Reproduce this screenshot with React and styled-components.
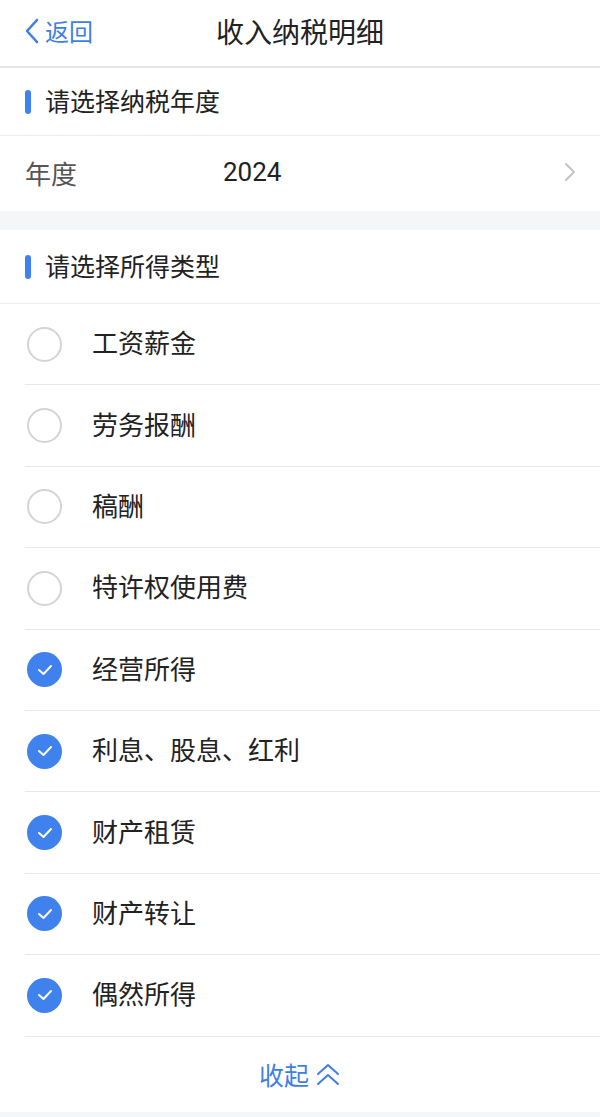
import React from "react";
import styled, { createGlobalStyle } from "styled-components";

const GlobalStyle = createGlobalStyle`
  html, body {
    margin: 0;
    padding: 0;
    background: #f5f6f8;
    font-family: "Noto Sans CJK SC", "Noto Sans", sans-serif;
  }
`;

const Page = styled.div`
  width: 600px;
  min-height: 1117px;
  background: #f5f6f8;
`;

const NavBar = styled.div`
  height: 61px;
  padding-bottom: 5px;
  display: grid;
  grid-template-columns: 120px 1fr 120px;
  align-items: center;
  background: #fff;
  border-bottom: 2px solid #e6e6e6;
`;

const BackLink = styled.div`
  display: flex;
  align-items: center;
  padding-left: 23px;
  color: #3e7fe6;
  font-size: 24px;
  gap: 4px;
`;

const Title = styled.div`
  text-align: center;
  font-size: 28px;
  color: #222;
`;

const Section = styled.div`
  background: #fff;
  margin-bottom: ${(p) => p.gap || 0}px;
`;

const SectionHead = styled.div`
  height: ${(p) => p.h}px;
  box-sizing: border-box;
  padding: 0 0 4px 25px;
  display: flex;
  align-items: center;
  gap: 14px;
  font-size: 25px;
  color: #222;
  border-bottom: 1px solid #ececec;
  &::before {
    content: "";
    width: 6px;
    height: 24px;
    margin-top: 4px;
    border-radius: 3px;
    background: #3f82ee;
  }
`;

const YearRow = styled.div`
  height: 75px;
  box-sizing: border-box;
  display: flex;
  align-items: center;
  padding: 0 24px 3px 25px;
  font-size: 26px;
`;

const YearLabel = styled.span`
  width: 198px;
  color: #555;
`;

const YearValue = styled.span`
  flex: 1;
  color: #222;
  font-family: Roboto, "Noto Sans", sans-serif;
`;

const Option = styled.div`
  height: 80.4px;
  margin-left: 25px;
  display: flex;
  align-items: center;
  gap: 30px;
  font-size: 26px;
  color: #222;
  border-bottom: 1px solid #e8e8e8;
`;

const OptionText = styled.span`
  margin-top: -5px;
`;

const Radio = styled.div`
  width: 35px;
  height: 35px;
  box-sizing: border-box;
  margin-left: 2px;
  border-radius: 50%;
  display: flex;
  align-items: center;
  justify-content: center;
  border: ${(p) => (p.checked ? "none" : "2px solid #d4d4d4")};
  background: ${(p) => (p.checked ? "#3f82ee" : "#fff")};
`;

const Footer = styled.div`
  height: 75px;
  display: flex;
  align-items: center;
  justify-content: center;
  gap: 6px;
  color: #3e7fe6;
  font-size: 25px;
  background: #fff;
`;

const options = [
  ["工资薪金", false],
  ["劳务报酬", false],
  ["稿酬", false],
  ["特许权使用费", false],
  ["经营所得", true],
  ["利息、股息、红利", true],
  ["财产租赁", true],
  ["财产转让", true],
  ["偶然所得", true],
];

export default function App() {
  return (
    <Page>
      <GlobalStyle />
      <NavBar>
        <BackLink>
          <svg width="18" height="28" viewBox="0 0 18 28">
            <path d="M14 3 L4 14 L14 25" fill="none" stroke="#3e7fe6" strokeWidth="2.6" strokeLinecap="round" strokeLinejoin="round" />
          </svg>
          返回
        </BackLink>
        <Title>收入纳税明细</Title>
        <div />
      </NavBar>

      <Section gap={19}>
        <SectionHead h={68}>请选择纳税年度</SectionHead>
        <YearRow>
          <YearLabel>年度</YearLabel>
          <YearValue>2024</YearValue>
          <svg width="12" height="20" viewBox="0 0 12 20">
            <path d="M2 2 L10 10 L2 18" fill="none" stroke="#c4c4c4" strokeWidth="2" strokeLinecap="round" strokeLinejoin="round" />
          </svg>
        </YearRow>
      </Section>

      <Section>
        <SectionHead h={74}>请选择所得类型</SectionHead>
        {options.map(([label, checked]) => (
          <Option key={label}>
            <Radio checked={checked}>
              {checked && (
                <svg width="16" height="12" viewBox="0 0 16 12">
                  <path d="M2 6 L6.5 10 L14 2" fill="none" stroke="#fff" strokeWidth="2" strokeLinecap="round" strokeLinejoin="round" />
                </svg>
              )}
            </Radio>
            <OptionText>{label}</OptionText>
          </Option>
        ))}
        <Footer>
          收起
          <svg width="26" height="26" viewBox="0 0 26 26">
            <path d="M3 13 L13 4 L23 13 M3 23 L13 14 L23 23" fill="none" stroke="#3e7fe6" strokeWidth="2" strokeLinecap="round" strokeLinejoin="round" />
          </svg>
        </Footer>
      </Section>
    </Page>
  );
}
